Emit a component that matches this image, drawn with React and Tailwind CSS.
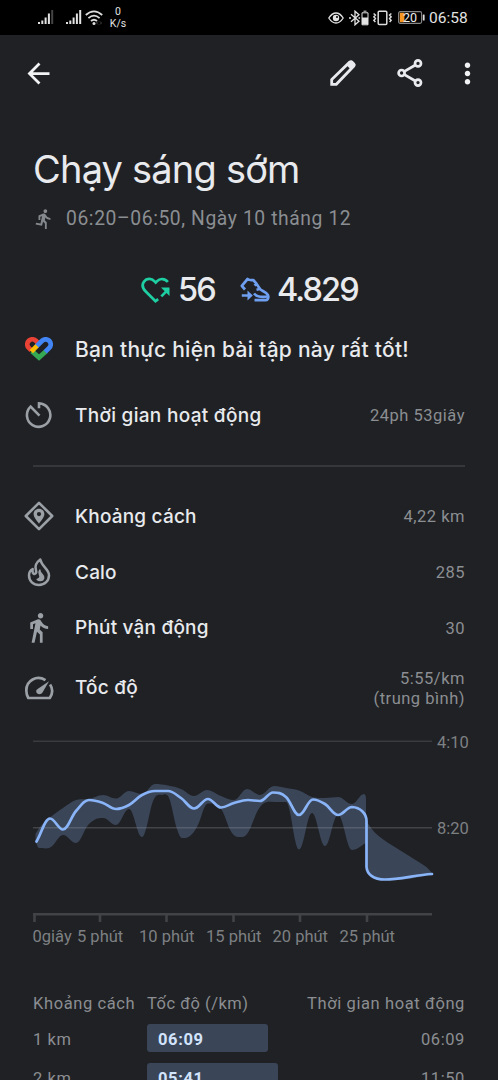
import React from "react";
import { MdArrowBack, MdDirectionsRun, MdDirectionsWalk, MdMoreVert } from "react-icons/md";

const speedPoints = [
  [36.5, 841.5], [50, 818.5], [63, 829.5], [76, 811], [89, 800], [103, 803], [116, 809],
  [129, 805], [142, 795], [155, 791], [168, 791], [181, 798], [194, 808.5],
  [208, 799], [221, 807.5], [234, 803], [248, 800], [260, 801], [273, 792.5],
  [286, 797], [299, 815], [313, 799.5], [325, 804], [338, 815], [352, 807],
];

const upperPoints = [
  [35.5, 834], [40, 827], [50, 817.5], [63, 808], [76, 800], [89, 799], [103, 795],
  [116, 798.5], [129, 791], [142, 794], [155, 784], [168, 785.5], [181, 789],
  [194, 796], [207, 790], [221, 796], [234, 800], [247, 789], [260, 795],
  [274, 786], [286, 788], [299, 790.5], [312, 797], [325, 798], [338, 797],
  [352, 804], [364, 794],
];

const lowerPoints = [
  [366, 843], [352, 850], [338, 815], [325, 846], [312, 813], [299, 849.5],
  [286, 802], [274, 802], [260, 807], [247, 834], [240, 837], [232, 833],
  [221, 809], [208, 803.5], [197, 827], [190, 836], [182, 838], [177, 829],
  [169, 798], [162, 795], [154, 799], [142, 837], [129, 809], [116, 825],
  [103, 818], [89, 824], [76, 843], [63, 835], [51, 847], [39, 848], [35.5, 843],
];

// Smooth segments that stay flat at local peaks and dips
const curve = (pts) => {
  const slope = pts.map((p, i) => {
    if (i === 0 || i === pts.length - 1) return 0;
    const a = (p[1] - pts[i - 1][1]) / (p[0] - pts[i - 1][0]);
    const b = (pts[i + 1][1] - p[1]) / (pts[i + 1][0] - p[0]);
    return a * b <= 0 ? 0 : (a + b) / 2;
  });
  slope[0] = (pts[1][1] - pts[0][1]) / (pts[1][0] - pts[0][0]);
  return pts
    .slice(1)
    .map((p, i) => {
      const q = pts[i];
      const d = (p[0] - q[0]) * 0.38;
      return `C${q[0] + d} ${q[1] + d * slope[i]} ${p[0] - d} ${p[1] - d * slope[i + 1]} ${p[0]} ${p[1]}`;
    })
    .join("");
};

const linePath = `M36.5 841.5${curve(speedPoints)}C360 807.5 366.5 813 366.5 821V867C367 874 373 879.5 385 879.5C400 879.5 415 875 432 874`;
const bandPath = `M35.5 834${curve(upperPoints)}Q366 794 366 800V819C372 834 384 840 398 849L422 864Q430 869 432 874C415 879 400 880.5 385 880C373 880 367 874 366 867V843${curve(lowerPoints)}Z`;

const ticks = [
  { x: 34.5, label: "0giây", tx: 32.5 },
  { x: 100, label: "5 phút", tx: 77 },
  { x: 166.5, label: "10 phút", tx: 139 },
  { x: 233.5, label: "15 phút", tx: 206 },
  { x: 300, label: "20 phút", tx: 272.5 },
  { x: 367, label: "25 phút", tx: 339.5 },
];

const SignalIcon = ({ weak }) => (
  <svg width="16" height="15" viewBox="0 0 16 15" fill="#e2e2e2">
    <rect x="0" y="12" width="2" height="2" />
    <rect x="3.3" y="10.5" width="2" height="3.5" />
    <rect x="6.6" y="7.5" width="2" height="6.5" />
    <rect x="9.9" y="3.5" width="2" height="10.5" />
    <rect x="13.2" y="0" width="2" height="14" fill={weak ? "#444" : "#e2e2e2"} />
  </svg>
);

const WifiIcon = () => (
  <svg width="18" height="16" viewBox="0 0 18 16" fill="none" stroke="#dedede" strokeWidth="1.8">
    <path d="M.8 5Q9-2.2 17.2 5M3.4 8.2Q9 3 14.6 8.2M6 11Q9 8.4 12 11" />
    <circle cx="9" cy="13.4" r="1.5" fill="#dedede" stroke="none" />
    <path d="M13 11.5l-1.5 1.5 1.5 1.5M15 11.5l1.5 1.5-1.5 1.5" stroke="#444" strokeWidth="1" />
  </svg>
);

const EyeIcon = () => (
  <svg width="16" height="12" viewBox="0 0 16 12" fill="none" stroke="#e2e2e2" strokeWidth="1.3">
    <path d="M.8 6Q4 1 8 1t7.2 5Q12 11 8 11T.8 6z" />
    <circle cx="8" cy="6" r="3.2" fill="#e2e2e2" stroke="none" />
    <circle cx="9" cy="5" r="1" fill="#000" stroke="none" />
  </svg>
);

const BluetoothIcon = () => (
  <svg width="20" height="16" viewBox="0 0 20 16" fill="none" stroke="#e2e2e2" strokeWidth="1.3">
    <path d="M2 4.2l8 7L6 14.8V1.2l4 3.6-8 7" />
    <path d="M0 8h2M9.5 8h1.6" />
    <path d="M13 2.8h6v12h-6zM14.5 1.2h3" strokeWidth="1" />
    <path d="M13 7.5h6v7h-6z" fill="#e2e2e2" stroke="none" />
  </svg>
);

const VibrateIcon = () => (
  <svg width="19" height="16" viewBox="0 0 19 16" fill="none" stroke="#dcdcdc" strokeWidth="1.5">
    <rect x="5.2" y="1.2" width="8.6" height="13.4" rx="1" />
    <path d="M.6 3.5l1.8 1.5-1.5 1.8 1.5 1.8L.9 10.4 2.4 12M18.4 3.5l-1.8 1.5 1.5 1.8-1.5 1.8 1.5 1.8-1.5 1.6" />
  </svg>
);

const BatteryIcon = () => (
  <svg width="27" height="13" viewBox="0 0 27 13">
    <rect x="0.6" y="0.6" width="23" height="11.8" rx="1.6" fill="none" stroke="#888" strokeWidth="1.1" />
    <rect x="1.8" y="1.8" width="4.6" height="9.4" fill="#f79824" />
    <rect x="24.8" y="3.5" width="1.8" height="6" rx=".5" fill="#ddd" />
    <text x="5" y="10.8" fill="#eee" fontSize="12.5" fontFamily="Roboto, sans-serif">20</text>
  </svg>
);

const PencilIcon = () => (
  <svg width="26" height="26" viewBox="0 0 26 26" fill="none" stroke="#e8eaed" strokeWidth="2.8">
    <path d="M1.7 24.3v-4.7L19.6 2.2q1.4-1 2.7.2l1.3 1.3q1.2 1.3 0 2.6L6.3 24.3z" />
    <path d="M16.8 5l3.2-3.2q1.3-1.1 2.6 0l1.6 1.6q1.1 1.3 0 2.6L21 9.2z" fill="#e8eaed" strokeWidth="1" />
  </svg>
);

const ShareIcon = () => (
  <svg width="26" height="28" viewBox="0 0 26 28" fill="none" stroke="#e8eaed" strokeWidth="2.7">
    <path d="M7 12.7L18.4 6M7 15.3L18.4 22" />
    <circle cx="4.6" cy="14" r="3" />
    <circle cx="21" cy="4.4" r="3" />
    <circle cx="21" cy="23.6" r="3" />
  </svg>
);

const HeartPointsIcon = () => (
  <svg width="29" height="26" viewBox="0 0 29 26" fill="none" stroke="#1ecfa3" strokeWidth="2.7">
    <path d="M17.2 22.2L14.5 24.2L5 14.8C1.6 11.4.8 7.5 3 4.6 5.6 1.2 10.6 1.1 13.3 4.1l1.4 1.5 1.4-1.5c2.8-3 8-2.8 10.7.9" />
    <path d="M20.3 19.4l6-6" />
    <path d="M20 10.5h8.5V19z" fill="#1ecfa3" stroke="none" />
  </svg>
);

const StepsIcon = () => (
  <svg width="30" height="26" viewBox="0 0 30 26" fill="none" stroke="#6f9ff0" strokeWidth="2.7" strokeLinejoin="round">
    <path d="M5 12.5L1.8 8.8l5.8-6.8c1.7 1.2 3.7 1.4 5.6 1l3.3 3.7-2 1.8M16.5 6.7l3.5 5.3-3.5.8M20 12c2 2.4 7.8 3 8.3 7.3.2 2.4-.9 3.9-2.8 3.9H14.5" />
    <path d="M1.8 18.5h8M14 16.5c3.2 3.8 8 3.8 13.5 3" />
    <path d="M7.5 13.5l5.3 5-5.3 5z" fill="#6f9ff0" stroke="none" />
  </svg>
);

const FitIcon = () => (
  <svg width="28" height="24" viewBox="0 0 28 24" fill="none" strokeWidth="4.8">
    <path d="M7 14.2L14 20.6L21 14.2" stroke="#34a853" />
    <path d="M6.3 13.4L3.8 10.9A5 5 0 0 1 10.9 3.8L14 6.9" stroke="#ea4335" />
    <path d="M20.2 14.9L24.2 10.9A5 5 0 0 0 17.1 3.8L11.5 9.4" stroke="#4285f4" />
    <path d="M12 8.9L6.3 14.6" stroke="#fbbc04" />
  </svg>
);

const TimerIcon = () => (
  <svg width="28" height="28" viewBox="0 0 28 28" fill="none" stroke="#9aa0a6" strokeWidth="2.6">
    <path d="M14 7.3V2.4A11.7 11.7 0 1 1 5.6 5.6L14.5 14.6" />
  </svg>
);

const DistanceIcon = () => (
  <svg width="30" height="30" viewBox="0 0 30 30" fill="none" stroke="#9aa0a6" strokeWidth="2.6" strokeLinejoin="round">
    <path d="M15 1.8l13.2 13.2-13.2 13.2L1.8 15z" />
    <path d="M15 7.8c-3.2 0-5.4 2.3-5.4 5.2 0 3.6 3.4 6.6 5.4 9.8 2-3.2 5.4-6.2 5.4-9.8 0-2.9-2.2-5.2-5.4-5.2zm0 3.2a2.1 2.1 0 1 1 0 4.2 2.1 2.1 0 0 1 0-4.2z" fill="#9aa0a6" fillRule="evenodd" stroke="none" />
  </svg>
);

const CaloriesIcon = () => (
  <svg width="24" height="30" viewBox="0 0 24 30" fill="none" stroke="#9aa0a6" strokeWidth="2.5" strokeLinejoin="round">
    <path d="M13.3 2.5C9.2 5.5 7.6 9.5 9 13.3c1 3-1.8 5-3.1 2.6-.6-1.1-.5-2.3-.2-3.9C3 13.5 2 16 2 18.3 2 24 6.3 28 12 28s10-4.2 10-9.7C22 11.8 14.8 10 13.3 2.5z" />
    <path d="M12.8 13.2c-.3 3.6 4.6 4.3 3.8 8-.6 2.5-4.4 3.1-6.4 1.3 2.9-.6 3.5-2.6 2.3-5.2-.7-1.5-.6-2.9.3-4.1z" fill="#9aa0a6" strokeWidth="1.6" />
  </svg>
);

const SpeedIcon = () => (
  <svg width="30" height="24" viewBox="0 0 30 24" fill="none" stroke="#9aa0a6" strokeWidth="2.7" strokeLinejoin="round">
    <path d="M21.5 4.2C12.8-1.3 2.3 4.3 2.3 14.5c0 3 .8 5.3 2 7.5h21.5c3.2-4.8 2.8-9.7.3-13.5" />
    <path d="M25 5.2L18.5 16.5c-2 3.2-6.800 1.500-6.300-1.500.2-1 .7-1.500 1.400-2z" fill="#9aa0a6" stroke="none" />
  </svg>
);

const StatRow = ({ icon, label, value, className, labelClass = "text-[19px] tracking-[0.2px]" }) => (
  <div className={`flex items-center pl-6 pr-[33px] ${className}`}>
    <div className="w-[30px] shrink-0 flex justify-center text-[#9aa0a6]">{icon}</div>
    <div className={`ml-[21px] pt-[2px] whitespace-nowrap font-[Inter,sans-serif] font-medium text-[#e8eaed] ${labelClass}`}>
      {label}
    </div>
    <div className="ml-auto pt-[2px] text-right text-[16.5px] leading-5 tracking-[0.5px] whitespace-pre-line">{value}</div>
  </div>
);

const App = () => {
  return (
    <div className="w-[498px] h-[1080px] overflow-hidden bg-[#202124] font-[Roboto,sans-serif] text-[#8b8e92]">
      {/* Status bar */}
      <div className="h-[35px] bg-black flex items-center pl-[38px] pr-[30px] text-[#e2e2e2]">
        <SignalIcon weak />
        <div className="ml-3 flex"><SignalIcon /></div>
        <div className="ml-[3px] flex"><WifiIcon /></div>
        <div className="ml-[5px] w-[20px] pt-px text-center text-[10.5px] leading-[12px]">
          <div>0</div>
          <div>K/s</div>
        </div>
        <div className="ml-auto flex items-center">
          <EyeIcon />
          <div className="ml-[5px]"><BluetoothIcon /></div>
          <div className="ml-[4px]"><VibrateIcon /></div>
          <div className="ml-[6px]"><BatteryIcon /></div>
          <div className="ml-1 w-[39px] text-[15.5px] leading-5 whitespace-nowrap">06:58</div>
        </div>
      </div>

      {/* Toolbar */}
      <div className="h-[76px] flex items-center pl-[22px] pr-[14px] text-[#f1f3f4]">
        <MdArrowBack size={33} />
        <div className="ml-auto flex items-center">
          <PencilIcon />
          <div className="ml-[41px]"><ShareIcon /></div>
          <div className="ml-[28px]"><MdMoreVert size={33} /></div>
        </div>
      </div>

      {/* Title */}
      <div className="h-[122px] pt-[33px] pl-[33px]">
        <h1 className="font-[Inter,sans-serif] font-normal text-[38px] leading-[50px] tracking-[-0.8px] text-[#e8eaed] whitespace-nowrap">
          Chạy sáng sớm
        </h1>
        <div className="mt-3 flex items-center">
          <MdDirectionsRun size={22} color="#85898d" />
          <span className="ml-[11px] pt-px text-[19.3px] leading-6 tracking-[0.6px]">06:20–06:50, Ngày 10 tháng 12</span>
        </div>
      </div>

      {/* Heart points and steps */}
      <div className="h-[83px] pt-[31px] pl-[141px] flex items-center font-[Inter,sans-serif] font-medium text-[32.5px] leading-9 text-[#e8eaed]">
        <HeartPointsIcon />
        <span className="ml-2 w-[38px] tracking-[-1.8px]">56</span>
        <div className="ml-6"><StepsIcon /></div>
        <span className="ml-[7px] tracking-[-1.9px]">4.829</span>
      </div>

      <StatRow
        className="h-[66px]"
        labelClass="text-[21px] tracking-[0.27px]"
        icon={<FitIcon />}
        label="Bạn thực hiện bài tập này rất tốt!"
      />
      <StatRow
        className="h-[66px]"
        labelClass="text-[19px] tracking-[0.3px]"
        icon={<TimerIcon />}
        label="Thời gian hoạt động"
        value="24ph 53giây"
      />
      <div className="mx-[33px] mt-[17px] h-[2px] bg-[#36373a]" />
      <StatRow className="mt-[21px] h-[56px]" icon={<DistanceIcon />} label="Khoảng cách" value="4,22 km" />
      <StatRow className="h-[56px]" icon={<CaloriesIcon />} label="Calo" value="285" />
      <StatRow className="h-[55px]" icon={<MdDirectionsWalk size={33} className="shrink-0 mr-[2px]" />} label="Phút vận động" value="30" />
      <StatRow className="h-[65px]" icon={<SpeedIcon />} label="Tốc độ" value={"5:55/km\n(trung bình)"} />

      {/* Speed chart */}
      <svg className="block" width="498" height="240" viewBox="0 720 498 240" fill="none">
        <path d={bandPath} fill="#3a4558" />
        <path d="M33 741.2H432" stroke="#3a3b3e" strokeWidth="1.6" />
        <path d="M33 827.7H432" stroke="#9aa0a6" strokeOpacity=".28" strokeWidth="1.5" />
        <path d="M33 914.3H432" stroke="#424346" strokeWidth="2.6" />
        {ticks.map((tick) => (
          <path key={tick.x} d={`M${tick.x} 914V922`} stroke="#424346" strokeWidth="2.6" />
        ))}
        <path d={linePath} stroke="#8ab4f8" strokeWidth="2.7" strokeLinecap="round" strokeLinejoin="round" />
        <g fill="#7d8083" fontSize="16.5" fontFamily="Roboto, sans-serif">
          <text x="437" y="747.5">4:10</text>
          <text x="437" y="833.5">8:20</text>
          {ticks.map((tick) => (
            <text key={tick.label} x={tick.tx} y="941.5">{tick.label}</text>
          ))}
        </g>
      </svg>

      {/* Splits */}
      <div className="pt-[33px] px-[33px] text-[16.5px] leading-[22px] tracking-[0.6px] whitespace-nowrap">
        <div className="flex">
          <div className="w-[114px]">Khoảng cách</div>
          <div className="tracking-[0.5px]">Tốc độ (/km)</div>
          <div className="ml-auto">Thời gian hoạt động</div>
        </div>
        <div className="mt-[9px] flex items-center h-[28px]">
          <div className="w-[114px] pt-[3px]">1 km</div>
          <div className="w-[121px] h-[28px] rounded-[3px] bg-[#3a4558] pl-[11px] leading-[31px] font-bold text-[#d2e3fc]">06:09</div>
          <div className="ml-auto pt-[3px]">06:09</div>
        </div>
        <div className="mt-[11px] flex items-center h-[28px]">
          <div className="w-[114px] pt-[3px]">2 km</div>
          <div className="w-[131px] h-[28px] rounded-[3px] bg-[#3a4558] pl-[11px] leading-[31px] font-bold text-[#d2e3fc]">05:41</div>
          <div className="ml-auto pt-[3px]">11:50</div>
        </div>
      </div>
    </div>
  );
};

export default App;
